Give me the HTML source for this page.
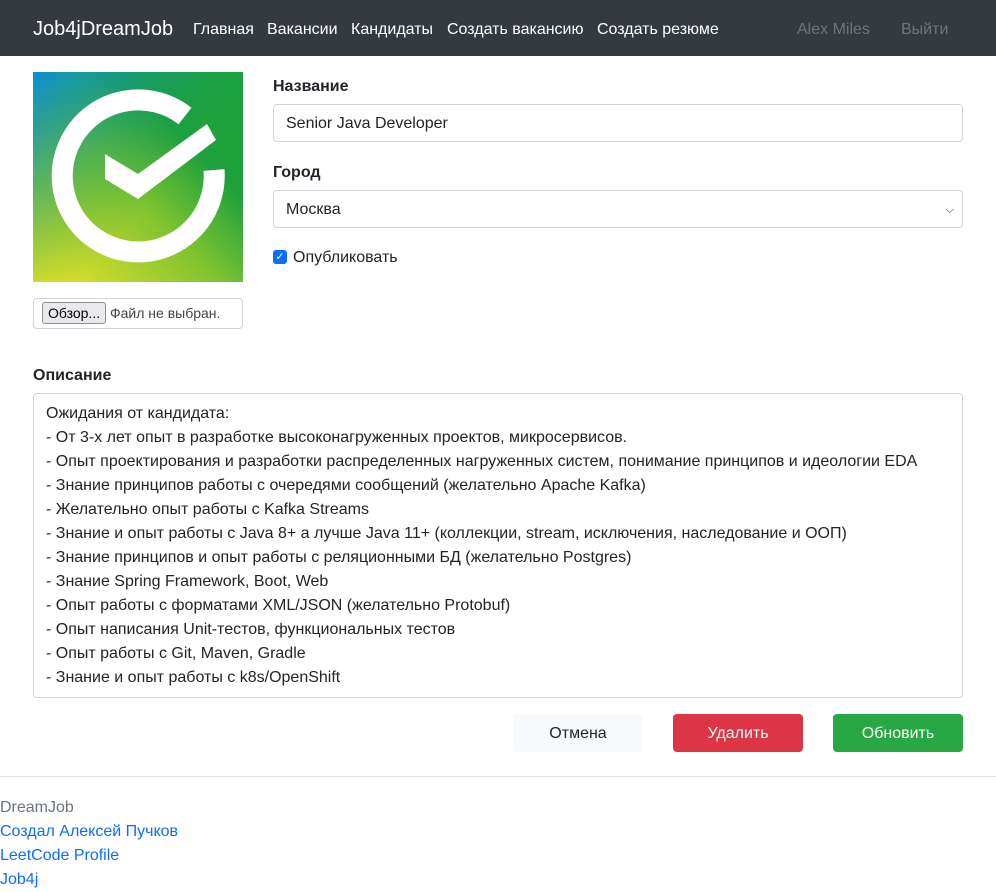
<!DOCTYPE html>
<html><head><meta charset="utf-8"><style>
*{box-sizing:border-box}
body{margin:0;font-family:"Liberation Sans",Arial,sans-serif;font-size:16px;color:#212529;background:#fff;width:996px;height:889px;overflow:hidden;position:relative}
.nav{height:56px;background:#343a40;position:relative}
.nav span{position:absolute;top:21px;color:#fff;font-size:16px}
.brand{left:33px!important;top:18px!important;font-size:20px!important}
.abs{position:absolute}
label.b{position:absolute;font-weight:bold;font-size:16px}
.inp{position:absolute;border:1px solid #ced4da;border-radius:4px;background:#fff;padding-left:12px;line-height:38px}
.btn{position:absolute;top:714px;width:130px;height:38px;border-radius:4px;text-align:center;line-height:40px}
a{color:#0d6efd;text-decoration:none}
</style></head><body>
<div class="nav">
<span class="brand">Job4jDreamJob</span>
<span style="left:193px">Главная</span>
<span style="left:267px">Вакансии</span>
<span style="left:351px">Кандидаты</span>
<span style="left:447px">Создать вакансию</span>
<span style="left:597px">Создать резюме</span>
<span style="left:797px;color:#6c757d">Alex Miles</span>
<span style="left:901px;color:#6c757d">Выйти</span>
</div>
<svg class="abs" style="left:33px;top:72px" width="210" height="210" viewBox="33 72 210 210">
<defs><linearGradient id="g" x1="0" y1="1" x2="1" y2="0">
<stop offset="0" stop-color="#eee52a"/><stop offset="0.45" stop-color="#7fc330"/><stop offset="0.7" stop-color="#1ea13c"/><stop offset="1" stop-color="#1aa33a"/></linearGradient>
<linearGradient id="h" x1="0" y1="0" x2="0.6" y2="0.6"><stop offset="0" stop-color="#0a8fd6"/><stop offset="1" stop-color="#1ea13c" stop-opacity="0"/></linearGradient></defs>
<rect x="33" y="72" width="210" height="210" fill="url(#g)"/>
<rect x="33" y="72" width="210" height="210" fill="url(#h)"/>
<path d="M185 116 A76 76 0 1 0 214 170" fill="none" stroke="#fff" stroke-width="21"/>
<polygon points="105,154 138,174 207,124 216,140 138,199 105,179" fill="#fff"/>
</svg>
<div class="inp" style="left:33px;top:298px;width:210px;height:31px;line-height:29px;padding-left:8px;font-size:14px">
<span style="display:inline-block;border:1px solid #8f8f8f;background:#e9e9ed;border-radius:3px;padding:0 5px;line-height:20px;color:#000">Обзор...</span> <span style="color:#444">Файл не выбран.</span></div>
<label class="b" style="left:273px;top:78px">Название</label>
<div class="inp" style="left:273px;top:104px;width:690px;height:38px">Senior Java Developer</div>
<label class="b" style="left:273px;top:164px">Город</label>
<div class="inp" style="left:273px;top:190px;width:690px;height:38px">Москва<span style="position:absolute;right:8px;top:0;font-size:11px">&#9013;</span></div>
<div class="abs" style="left:273px;top:250px;width:14px;height:14px;background:#0d6efd;border-radius:3px;color:#fff;font-size:11px;line-height:14px;text-align:center">✓</div>
<span class="abs" style="left:293px;top:249px">Опубликовать</span>
<label class="b" style="left:33px;top:367px">Описание</label>
<div class="inp" style="left:33px;top:393px;width:930px;height:305px;line-height:24px;padding-top:8px;white-space:pre">Ожидания от кандидата:
- От 3-х лет опыт в разработке высоконагруженных проектов, микросервисов.
- Опыт проектирования и разработки распределенных нагруженных систем, понимание принципов и идеологии EDA
- Знание принципов работы с очередями сообщений (желательно Apache Kafka)
- Желательно опыт работы с Kafka Streams
- Знание и опыт работы с Java 8+ а лучше Java 11+ (коллекции, stream, исключения, наследование и ООП)
- Знание принципов и опыт работы с реляционными БД (желательно Postgres)
- Знание Spring Framework, Boot, Web
- Опыт работы с форматами XML/JSON (желательно Protobuf)
- Опыт написания Unit-тестов, функциональных тестов
- Опыт работы с Git, Maven, Gradle
- Знание и опыт работы с k8s/OpenShift</div>
<div class="btn" style="left:513px;background:#f8f9fa">Отмена</div>
<div class="btn" style="left:673px;background:#dc3545;color:#fff">Удалить</div>
<div class="btn" style="left:833px;background:#28a745;color:#fff">Обновить</div>
<div class="abs" style="left:0;top:776px;width:996px;border-top:1px solid #dee2e6"></div>
<div class="abs" style="left:0;top:796px;line-height:24px"><span style="color:#6c757d">DreamJob</span><br><a>Создал Алексей Пучков</a><br><a>LeetCode Profile</a><br><a>Job4j</a></div>
</body></html>
